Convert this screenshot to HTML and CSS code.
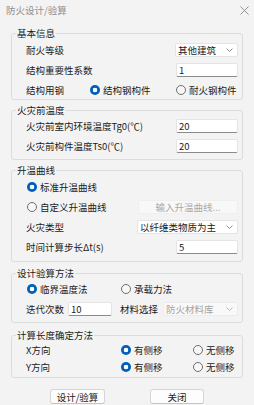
FILE: index.html
```html
<!DOCTYPE html>
<html>
<head>
    <meta charset="utf-8">
    <title>防火设计/验算</title>
    <link rel="stylesheet" href="styles.css">
</head>
<body>
    <div class="titlebar">
        <span class="title">防火设计/验算</span>
        <svg class="close" width="9" height="9" viewBox="0 0 9 9"><path d="M0.5 0.5 L8.5 8.5 M8.5 0.5 L0.5 8.5" stroke="#8a8a8a" stroke-width="0.9"/></svg>
    </div>

    <!-- 基本信息 -->
    <fieldset class="group g-basic">
        <legend>基本信息</legend>
        <div class="row r1">
            <span class="label">耐火等级</span>
            <div class="combo w63"><span>其他建筑</span><svg class="chev" width="7" height="4" viewBox="0 0 7 4"><path d="M0.5 0.5 L3.5 3.5 L6.5 0.5" fill="none" stroke="#777" stroke-width="0.8"/></svg></div>
        </div>
        <div class="row r2">
            <span class="label">结构重要性系数</span>
            <div class="edit w62">1</div>
        </div>
        <div class="row r3 steel">
            <span class="label">结构用钢</span>
            <label class="opt"><span class="radio on"></span>结构钢构件</label>
            <label class="opt"><span class="radio"></span>耐火钢构件</label>
        </div>
    </fieldset>

    <!-- 火灾前温度 -->
    <fieldset class="group g-temp">
        <legend>火灾前温度</legend>
        <div class="row">
            <span class="label">火灾前室内环境温度Tg0(℃)</span>
            <div class="edit w62">20</div>
        </div>
        <div class="row">
            <span class="label">火灾前构件温度Ts0(℃)</span>
            <div class="edit w62">20</div>
        </div>
    </fieldset>

    <!-- 升温曲线 -->
    <fieldset class="group g-curve">
        <legend>升温曲线</legend>
        <div class="row">
            <label class="opt first"><span class="radio on"></span>标准升温曲线</label>
        </div>
        <div class="row">
            <label class="opt first"><span class="radio"></span>自定义升温曲线</label>
            <div class="btn-off">输入升温曲线...</div>
        </div>
        <div class="row">
            <span class="label">火灾类型</span>
            <div class="combo w101"><span>以纤维类物质为主</span><svg class="chev" width="7" height="4" viewBox="0 0 7 4"><path d="M0.5 0.5 L3.5 3.5 L6.5 0.5" fill="none" stroke="#777" stroke-width="0.8"/></svg></div>
        </div>
        <div class="row">
            <span class="label">时间计算步长Δt(s)</span>
            <div class="edit w62">5</div>
        </div>
    </fieldset>

    <!-- 设计验算方法 -->
    <fieldset class="group g-method">
        <legend>设计验算方法</legend>
        <div class="row method">
            <label class="opt first"><span class="radio on"></span>临界温度法</label>
            <label class="opt"><span class="radio"></span>承载力法</label>
        </div>
        <div class="row iter">
            <span class="label">迭代次数</span>
            <div class="edit w44">10</div>
            <span class="label mat">材料选择</span>
            <div class="combo off w75"><span>防火材料库</span><svg class="chev" width="7" height="4" viewBox="0 0 7 4"><path d="M0.5 0.5 L3.5 3.5 L6.5 0.5" fill="none" stroke="#aaa" stroke-width="0.8"/></svg></div>
        </div>
    </fieldset>

    <!-- 计算长度确定方法 -->
    <fieldset class="group g-length">
        <legend>计算长度确定方法</legend>
        <div class="row sway">
            <span class="label">X方向</span>
            <label class="opt"><span class="radio on"></span>有侧移</label>
            <label class="opt"><span class="radio"></span>无侧移</label>
        </div>
        <div class="row sway">
            <span class="label">Y方向</span>
            <label class="opt"><span class="radio on"></span>有侧移</label>
            <label class="opt"><span class="radio"></span>无侧移</label>
        </div>
    </fieldset>

    <div class="actions">
        <button type="button" class="btn w55">设计/验算</button>
        <button type="button" class="btn w54">关闭</button>
    </div>
</body>
</html>
```

FILE: styles.css
```css
* {
    box-sizing: border-box;
}

body {
    margin: 0;
    width: 254px;
    height: 405px;
    overflow: hidden;
    background-color: #f3f3f3;
    font-family: "Noto Sans CJK SC", "Noto Sans", sans-serif;
    font-size: 9.5px;
    color: #1a1a1a;
}

.titlebar {
    height: 20px;
    display: flex;
    align-items: center;
    justify-content: space-between;
    padding: 0 5px 0 6px;
}

.title {
    color: #8f8f8f;
}

.group {
    margin: 0 11px;
    padding: 0 4px 0 0;
    border: 1px solid #dcdcdc;
    border-radius: 3px;
    min-width: 0;
}

.group legend {
    margin-left: 4px;
    padding: 0 1px;
    line-height: 12px;
}

.row {
    display: flex;
    align-items: center;
    height: 20px;
    padding-left: 14px;
}

.label {
    flex: 1;
    white-space: nowrap;
}

/* group spacing */
.g-basic {
    margin-top: 7px;
}

.g-basic .r1 {
    height: 21px;
}

.g-basic .r3 {
    height: 19px;
}

.g-temp {
    margin-top: 4px;
    padding-bottom: 3px;
}

.g-curve {
    margin-top: 4px;
    padding-top: 1px;
    padding-bottom: 4px;
}

.g-method {
    margin-top: 5px;
    padding-bottom: 3px;
}

.g-length {
    margin-top: 6px;
    padding-bottom: 2px;
}

.g-length .row {
    height: 17px;
}

/* controls */
.edit,
.combo {
    height: 14px;
    background-color: #ffffff;
    border: 1px solid #e4e4e4;
    border-radius: 2px;
    padding: 0 2px;
    display: flex;
    align-items: center;
    white-space: nowrap;
}

.edit {
    border-bottom-color: #8a8a8a;
}

.combo {
    justify-content: space-between;
    padding-right: 4px;
}

.combo.off {
    background-color: #f9f9f9;
    border-color: #ececec;
    color: #a3a3a3;
}

.w44 { width: 44px; }
.w55 { width: 55px; }
.w54 { width: 54px; }
.w62 { width: 62px; }
.w63 { width: 63px; }
.w75 { width: 75px; }
.w101 { width: 101px; }

.btn-off {
    width: 100px;
    height: 14px;
    background-color: #f8f8f8;
    border: 1px solid #efefef;
    border-radius: 2px;
    color: #a8a8a8;
    display: flex;
    align-items: center;
    justify-content: center;
    margin-left: auto;
}

.opt {
    display: flex;
    align-items: center;
    gap: 3px;
    white-space: nowrap;
}

.opt.first {
    margin-left: 1px;
}

.radio {
    width: 10px;
    height: 10px;
    border-radius: 50%;
    border: 1px solid #6f6f6f;
    background-color: #f7f7f7;
    flex: none;
}

.radio.on {
    border: none;
    background: radial-gradient(circle, #ffffff 0 2px, #005fb8 2.6px);
}

.steel .label {
    flex: none;
    width: 64px;
}

.steel .opt:nth-of-type(1) {
    width: 86px;
}

.method .opt.first {
    width: 94px;
}

.iter .label {
    flex: none;
    width: 42px;
}

.iter .mat {
    width: 43px;
    margin-left: 8px;
}

.sway .label {
    flex: none;
    width: 95px;
}

.sway .opt:nth-of-type(1) {
    width: 72px;
}

.actions {
    display: flex;
    justify-content: center;
    gap: 45px;
    margin-top: 11px;
}

.btn {
    height: 15px;
    padding: 0;
    font-family: inherit;
    font-size: 9.5px;
    color: #1a1a1a;
    background-color: #fdfdfd;
    border: 1px solid #d6d6d6;
    border-bottom-color: #c4c4c4;
    border-radius: 3px;
}
```
